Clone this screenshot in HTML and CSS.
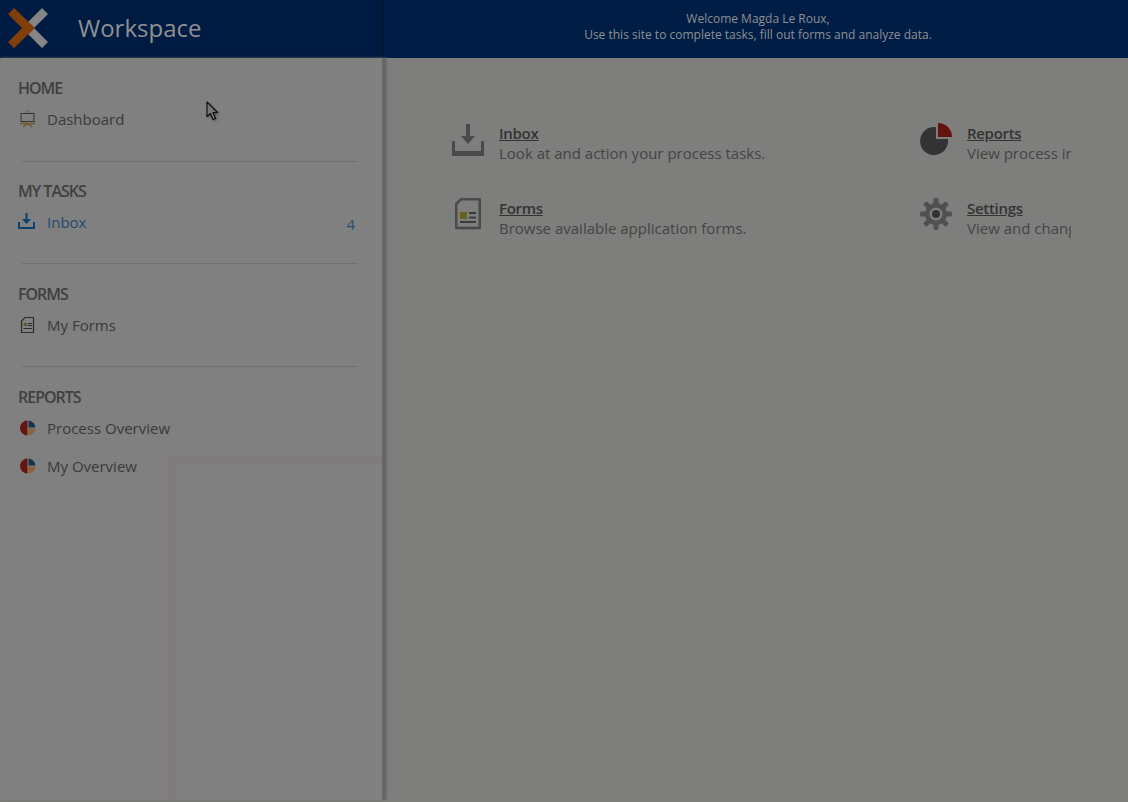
FILE: index.html
```html
<!DOCTYPE html>
<html lang="en">
<head>
    <meta charset="UTF-8">
    <title>Workspace</title>
    <link rel="stylesheet" href="styles.css">
</head>
<body>
    <header class="header">
        <div class="brand">
            <svg class="logo" width="42" height="42" viewBox="7 8 42 42">
                <path d="M42 8 L48 14 L34 28 L48 42 L42 48 L28 34 L22 28 L28 22 Z" fill="#858585"/>
                <path d="M14 8 L35 28 L14 48 L8 42 L22 28 L8 14 Z" fill="#823e08"/>
            </svg>
            <span class="brand-name">Workspace</span>
        </div>
        <div class="welcome">
            <div>Welcome Magda Le Roux,</div>
            <div>Use this site to complete tasks, fill out forms and analyze data.</div>
        </div>
    </header>

    <div class="layout">
        <nav class="sidebar">
            <section class="nav-section">
                <h3>HOME</h3>
                <a class="nav-item">
                    <svg class="nav-icon" width="20" height="20" viewBox="0 0 20 20">
                        <path d="M7 3.500 L9.500 1.500 L12 3.500" fill="none" stroke="#75552c" stroke-width="1"/>
                        <rect x="3" y="4.500" width="13" height="8" fill="none" stroke="#333" stroke-width="1"/>
                        <path d="M2 14.500 H17 M5 18 L9 15 M14 18 L10 15" fill="none" stroke="#75552c" stroke-width="1.300"/>
                    </svg>
                    <span>Dashboard</span>
                </a>
            </section>
            <section class="nav-section">
                <h3>MY TASKS</h3>
                <a class="nav-item active">
                    <svg class="nav-icon" width="20" height="20" viewBox="2 0 20 20">
                        <path d="M9.500 1 H11.500 V7 H15 L10.500 12 L6 7 H9.500 Z" fill="#0d4270"/>
                        <path d="M2 10 V17 H19 V10 H17 V15 H4 V10 Z" fill="#0d4270"/>
                    </svg>
                    <span>Inbox</span>
                    <span class="count">4</span>
                </a>
            </section>
            <section class="nav-section">
                <h3>FORMS</h3>
                <a class="nav-item">
                    <svg class="nav-icon" width="20" height="20" viewBox="0 0 20 20">
                        <path d="M7 2.500 H15.500 V17.500 H3.500 V6 Z" fill="none" stroke="#2c2c2c" stroke-width="1.200"/>
                        <rect x="5.500" y="8" width="3.500" height="3" fill="#635c1e"/>
                        <path d="M10 8.500 H14 M10 10.500 H14 M5.500 13.500 H14" stroke="#2c2c2c" stroke-width="1"/>
                    </svg>
                    <span>My Forms</span>
                </a>
            </section>
            <section class="nav-section">
                <h3>REPORTS</h3>
                <a class="nav-item">
                    <svg class="nav-icon" width="20" height="20" viewBox="0 0 20 20">
                        <path d="M9.500 2.500 V17.500 A7.500 7.500 0 0 1 9.500 2.500 Z" fill="#641712"/>
                        <path d="M10.500 2.500 A7.500 7.500 0 0 1 17.500 9.500 H10.500 Z" fill="#16334c"/>
                        <path d="M10.500 10.500 H17.500 A7.500 7.500 0 0 1 10.500 17.500 Z" fill="#8c6239"/>
                    </svg>
                    <span>Process Overview</span>
                </a>
                <a class="nav-item">
                    <svg class="nav-icon" width="20" height="20" viewBox="0 0 20 20">
                        <path d="M9.500 2.500 V17.500 A7.500 7.500 0 0 1 9.500 2.500 Z" fill="#641712"/>
                        <path d="M10.500 2.500 A7.500 7.500 0 0 1 17.500 9.500 H10.500 Z" fill="#16334c"/>
                        <path d="M10.500 10.500 H17.500 A7.500 7.500 0 0 1 10.500 17.500 Z" fill="#8c6239"/>
                    </svg>
                    <span>My Overview</span>
                </a>
            </section>
            <div class="ghost"></div>
        </nav>

        <main class="main">
            <div class="tiles">
                <div class="tile">
                    <svg class="tile-icon" width="34" height="34" viewBox="0 0 34 34">
                        <path d="M15 1 H19 V13 H24 L17 21 L10 13 H15 Z" fill="#4a4a4a"/>
                        <path d="M1 18 H4 V28 H30 V18 H33 V33 H1 Z" fill="#4a4a4a"/>
                    </svg>
                    <div>
                        <a class="tile-title">Inbox</a>
                        <p>Look at and action your process tasks.</p>
                    </div>
                </div>
                <div class="tile">
                    <svg class="tile-icon" width="34" height="34" viewBox="0 0 34 34">
                        <path d="M17 4.200 V16 H28.900 A14 14 0 1 1 17 4.200 Z" fill="#333"/>
                        <path d="M19 0 A14 14 0 0 1 33 14 H19 Z" fill="#66130e"/>
                    </svg>
                    <div>
                        <a class="tile-title">Reports</a>
                        <p>View process information and reports.</p>
                    </div>
                </div>
                <div class="tile">
                    <svg class="tile-icon" width="34" height="34" viewBox="0 0 34 34">
                        <path d="M10 1.250 H28.750 V30 H5.250 V6 Z" fill="none" stroke="#4a4a4a" stroke-width="2.500" stroke-linejoin="round"/>
                        <rect x="9" y="14" width="7" height="7" fill="#665f1e"/>
                        <path d="M18 15 H25 M18 19.500 H25 M9 24 H25" stroke="#3a3a3a" stroke-width="2.200"/>
                    </svg>
                    <div>
                        <a class="tile-title">Forms</a>
                        <p>Browse available application forms.</p>
                    </div>
                </div>
                <div class="tile">
                    <svg class="tile-icon" width="34" height="34" viewBox="0 1 34 34">
                        <g fill="#505050">
                            <rect x="14.500" y="1" width="5" height="32" rx="1.500"/>
                            <rect x="14.500" y="1" width="5" height="32" rx="1.500" transform="rotate(45 17 17)"/>
                            <rect x="14.500" y="1" width="5" height="32" rx="1.500" transform="rotate(90 17 17)"/>
                            <rect x="14.500" y="1" width="5" height="32" rx="1.500" transform="rotate(135 17 17)"/>
                        </g>
                        <circle cx="17" cy="17" r="11" fill="#505050"/>
                        <circle cx="17" cy="17" r="6.500" fill="#7e7e7e"/>
                        <circle cx="17" cy="17" r="4" fill="#333"/>
                    </svg>
                    <div>
                        <a class="tile-title">Settings</a>
                        <p>View and change your settings.</p>
                    </div>
                </div>
            </div>
        </main>
    </div>

    <svg class="cursor" width="14" height="20" viewBox="0 0 14 20">
        <path d="M1 1 V15.500 L4.500 12.500 L7 18.500 L9.500 17.500 L7 11.500 H11.500 Z" fill="#777" stroke="#0c0c0c" stroke-width="1.100" stroke-linejoin="round"/>
    </svg>
</body>
</html>
```

FILE: styles.css
```css
/* Base */
html, body {
    height: 100%;
}

body {
    font-family: "Open Sans", sans-serif;
    margin: 0;
    background: #7e7e7c;
    color: #3a3a3a;
    overflow: hidden;
}

.header {
    height: 58px;
    display: flex;
    background: #001d46;
}

.brand {
    width: 384px;
    display: flex;
    align-items: center;
    padding-left: 7px;
    box-sizing: border-box;
    background: #001b41;
    border-right: 2px solid #00152f;
}

.brand-name {
    margin-left: 29px;
    margin-top: -4px;
    font-size: 24px;
    color: #8e9094;
}

.welcome {
    flex: 1;
    padding: 11px 0 0 4px;
    text-align: center;
    font-size: 12px;
    line-height: 16px;
    color: #8f9194;
}

.layout {
    display: flex;
    height: 742px;
}

/* Sidebar */
.sidebar {
    position: relative;
    width: 386px;
    box-sizing: border-box;
    padding: 19px 27px 0 18px;
    background: #7f807f;
    border-right: 4px solid #666;
    box-shadow: 1px 0 2px #6e6e6e;
}

.nav-section {
    height: 103px;
    box-sizing: border-box;
    position: relative;
}

.nav-section h3 {
    margin: 0 0 1px;
    font-size: 16px;
    line-height: 22px;
    font-weight: 600;
    letter-spacing: -1px;
    color: #404040;
}

.nav-section::after {
    content: "";
    position: absolute;
    left: 4px;
    right: -3px;
    top: 84px;
    border-top: 1px solid #6f7072;
}

.nav-section + .nav-section::after {
    top: 83px;
}

.nav-section:last-of-type::after {
    display: none;
}

.nav-item {
    display: flex;
    align-items: center;
    height: 38px;
    font-size: 15px;
    color: #393b3c;
}

.nav-item span:first-of-type {
    margin-left: 9px;
}

.nav-item.active {
    color: #1f4a70;
}

.nav-icon {
    flex: none;
}

.count {
    margin-left: auto;
    margin-top: 3px;
    color: #2c4f72;
}

.ghost {
    position: absolute;
    left: 168px;
    right: 0;
    top: 398px;
    bottom: 0;
    border-top: 8px solid #807b7c;
    border-left: 8px solid #807b7c;
}

/* Main */
.main {
    flex: 1;
    padding: 64px 57px 0 65px;
    overflow: hidden;
}

.tiles {
    display: grid;
    grid-template-columns: 468px 152px;
    grid-auto-rows: 75px;
}

.tile {
    display: flex;
    gap: 14px;
    overflow: hidden;
    white-space: nowrap;
}

.tile-icon {
    flex: none;
    margin-top: 1px;
}

.tile-title {
    display: block;
    font-size: 15px;
    line-height: 22px;
    font-weight: 600;
    letter-spacing: -0.3px;
    text-decoration: underline;
    color: #333;
}

.tile p {
    margin: 0;
    font-size: 15px;
    line-height: 18px;
    color: #444;
}

.cursor {
    position: absolute;
    left: 206px;
    top: 101px;
    filter: drop-shadow(1px 1px 1px rgba(0, 0, 0, 0.4));
}
```
